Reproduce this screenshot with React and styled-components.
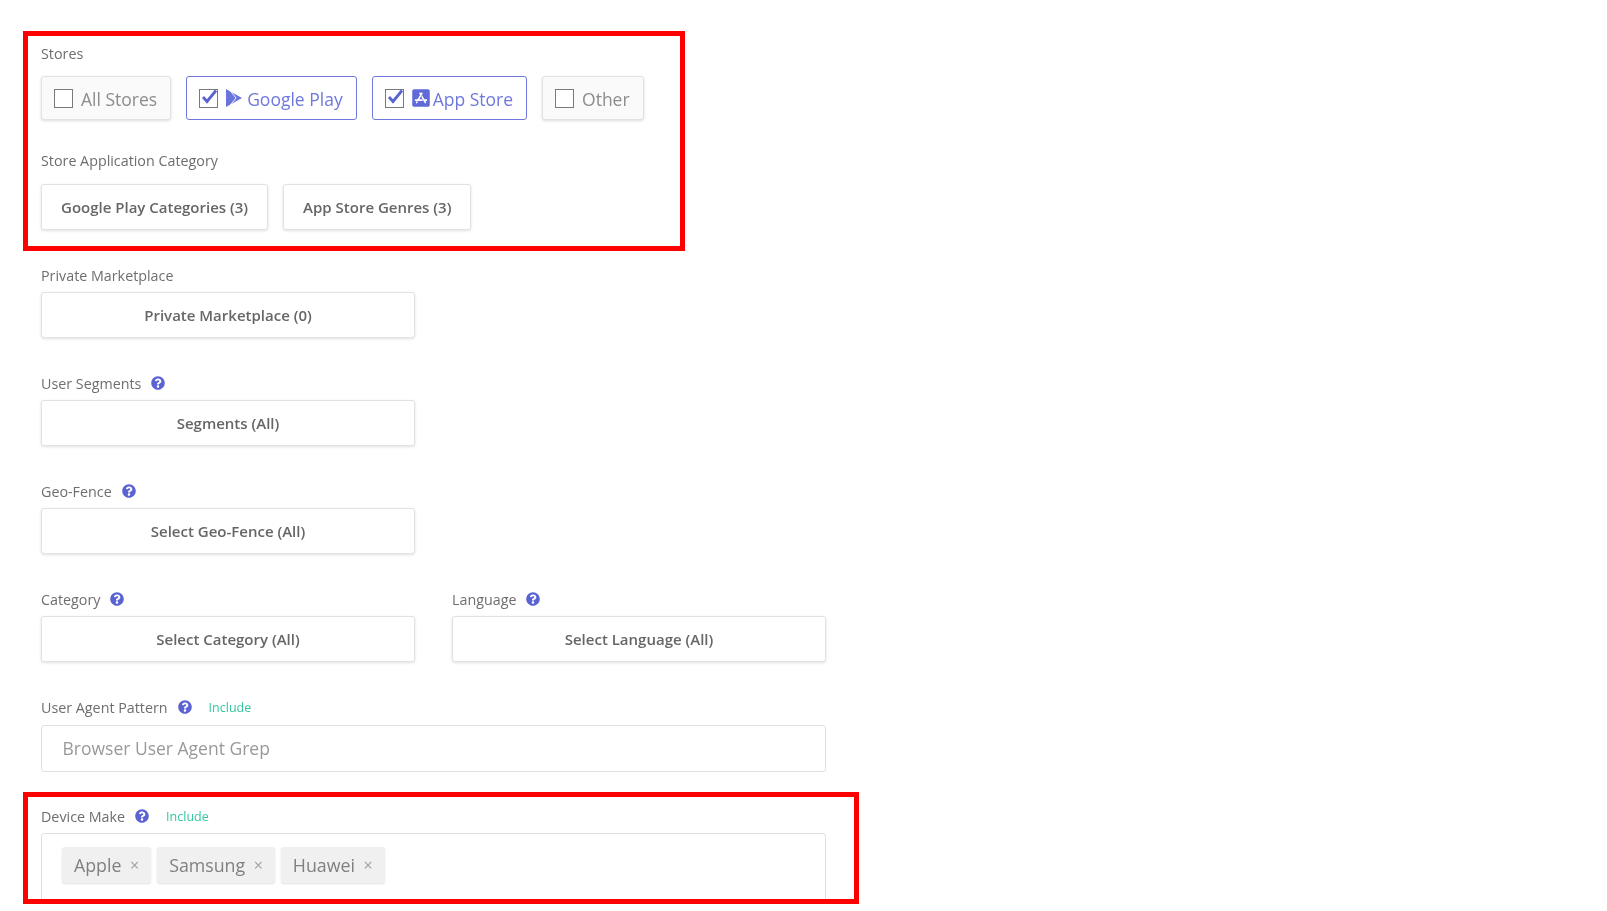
import React from 'react';
import styled, { createGlobalStyle } from 'styled-components';
import { FaQuestionCircle, FaAppStoreIos } from 'react-icons/fa';

const GlobalStyle = createGlobalStyle`
    html, body {
        margin: 0;
        background: #ffffff;
        font-family: 'Open Sans', 'Noto Sans', sans-serif;
    }
`;

const Page = styled.div`
    width: 1607px;
    height: 911px;
    overflow: hidden;
    box-sizing: border-box;
    padding: 31px 0 0 23px;
    filter: blur(0.4px);
`;

const Highlight = styled.section`
    box-sizing: border-box;
    width: ${(p) => p.$width}px;
    height: ${(p) => p.$height}px;
    border: 5px solid #ff0000;
    padding: ${(p) => p.$top}px 0 0 13px;
    overflow: hidden;
`;

const Plain = styled.div`
    padding-left: 18px;
`;

const Group = styled.div`
    margin-top: ${(p) => p.$top || 0}px;
`;

const Label = styled.div`
    display: flex;
    align-items: center;
    height: 20px;
    margin-bottom: ${(p) => p.$gap || 7}px;
    font-size: 14.3px;
    color: #6e6e6e;
`;

const Help = styled(FaQuestionCircle)`
    margin-left: 10px;
    width: 14px;
    height: 14px;
    color: #5b63d3;
`;

const Include = styled.span`
    margin-left: 17px;
    font-size: 12.5px;
    color: #34c8a0;
`;

const Row = styled.div`
    display: flex;
    gap: ${(p) => p.$gap || 15}px;
`;

const StoreButton = styled.div`
    box-sizing: border-box;
    display: flex;
    align-items: center;
    height: 44px;
    padding: 1px 13px 0 12px;
    border-radius: 3px;
    font-size: 17.5px;
    color: ${(p) => (p.$active ? '#6e78de' : '#8c8c8c')};
    background: ${(p) => (p.$active ? '#ffffff' : '#fafafa')};
    border: 1px solid ${(p) => (p.$active ? '#6e78de' : '#e2e2e2')};
    box-shadow: ${(p) => (p.$active ? 'none' : '0 1px 3px rgba(0, 0, 0, 0.14)')};
`;

const Box = styled.span`
    box-sizing: border-box;
    position: relative;
    flex: none;
    width: 19px;
    height: 19px;
    margin-top: -1px;
    margin-right: ${(p) => p.$gap}px;
    border: 1.5px solid #7a7a7a;
    background: #ffffff;
`;

const Tick = styled.svg`
    position: absolute;
    left: 0;
    top: -2px;
    width: 18px;
    height: 18px;
`;

const Logo = styled.svg`
    flex: none;
    width: 16px;
    height: 18px;
    margin-top: -1px;
    margin-right: 5px;
`;

const AppLogo = styled(FaAppStoreIos)`
    flex: none;
    width: 20px;
    height: 20px;
    margin-right: 2px;
    margin-top: -1px;
    color: #5f69d8;
`;

const SelectButton = styled.div`
    box-sizing: border-box;
    display: flex;
    align-items: center;
    justify-content: center;
    width: ${(p) => (p.$width ? `${p.$width}px` : 'auto')};
    height: 46px;
    padding: ${(p) => (p.$width ? '0' : '0 19px')};
    border: 1px solid #e2e2e2;
    border-radius: 3px;
    background: #ffffff;
    box-shadow: 0 1px 3px rgba(0, 0, 0, 0.13);
    font-size: 15px;
    font-weight: 600;
    color: #666666;
`;

const Columns = styled.div`
    display: flex;
    gap: 37px;
`;

const TextField = styled.div`
    box-sizing: border-box;
    display: flex;
    align-items: center;
    width: 785px;
    height: 47px;
    padding: 0 20px 2px 20.5px;
    border: 1px solid #e0e0e0;
    border-radius: 3px;
    font-size: 17.5px;
    color: #999999;
`;

const TagField = styled.div`
    box-sizing: border-box;
    display: flex;
    gap: 6px;
    width: 785px;
    height: 80px;
    padding: 13px 20px;
    border: 1px solid #e0e0e0;
    border-radius: 3px;
`;

const Tag = styled.div`
    display: flex;
    align-items: center;
    height: 36px;
    padding: 0 12px;
    border-radius: 3px;
    background: #f0f0f0;
    box-shadow: 0 1px 2px rgba(0, 0, 0, 0.12);
    font-size: 17.8px;
    color: #808080;
`;

const TagClose = styled.span`
    margin-left: 8.5px;
    font-size: 16px;
    color: #a0a0a0;
`;

const Check = () => (
    <Tick viewBox="0 0 18 18">
        <path d="M3 9l4 4.5 9-11" fill="none" stroke="#5b63d3" strokeWidth="2.8" />
    </Tick>
);

const PlayLogo = () => (
    <Logo viewBox="0 0 16 18">
        <path d="M0 0l16 9-16 9z" fill="#6a74dc" />
        <path d="M2-1l8 10-8 10" fill="none" stroke="#ffffff" strokeWidth="0.9" />
    </Logo>
);

const tags = ['Apple', 'Samsung', 'Huawei'];

const App = () => (
    <Page>
        <GlobalStyle />
        <Highlight $width={662} $height={220} $top={7}>
            <Label $gap={13}>Stores</Label>
            <Row>
                <StoreButton>
                    <Box $gap={8} />
                    All Stores
                </StoreButton>
                <StoreButton $active>
                    <Box $gap={8}>
                        <Check />
                    </Box>
                    <PlayLogo />
                    Google Play
                </StoreButton>
                <StoreButton $active>
                    <Box $gap={7}>
                        <Check />
                    </Box>
                    <AppLogo />
                    App Store
                </StoreButton>
                <StoreButton>
                    <Box $gap={8} />
                    Other
                </StoreButton>
            </Row>
            <Group $top={30}>
                <Label $gap={14}>Store Application Category</Label>
                <Row>
                    <SelectButton>Google Play Categories (3)</SelectButton>
                    <SelectButton>App Store Genres (3)</SelectButton>
                </Row>
            </Group>
        </Highlight>
        <Plain>
            <Group $top={14}>
                <Label>Private Marketplace</Label>
                <SelectButton $width={374}>Private Marketplace (0)</SelectButton>
            </Group>
            <Group $top={35}>
                <Label>
                    User Segments
                    <Help />
                </Label>
                <SelectButton $width={374}>Segments (All)</SelectButton>
            </Group>
            <Group $top={35}>
                <Label>
                    Geo-Fence
                    <Help />
                </Label>
                <SelectButton $width={374}>Select Geo-Fence (All)</SelectButton>
            </Group>
            <Columns>
                <Group $top={35}>
                    <Label>
                        Category
                        <Help />
                    </Label>
                    <SelectButton $width={374}>Select Category (All)</SelectButton>
                </Group>
                <Group $top={35}>
                    <Label>
                        Language
                        <Help />
                    </Label>
                    <SelectButton $width={374}>Select Language (All)</SelectButton>
                </Group>
            </Columns>
            <Group $top={35}>
                <Label $gap={8}>
                    User Agent Pattern
                    <Help />
                    <Include>Include</Include>
                </Label>
                <TextField>Browser User Agent Grep</TextField>
            </Group>
        </Plain>
        <Group $top={20}>
            <Highlight $width={836} $height={112} $top={9}>
                <Label>
                    Device Make
                    <Help />
                    <Include>Include</Include>
                </Label>
                <TagField>
                    {tags.map((tag) => (
                        <Tag key={tag}>
                            {tag}
                            <TagClose>×</TagClose>
                        </Tag>
                    ))}
                </TagField>
            </Highlight>
        </Group>
    </Page>
);

export default App;
